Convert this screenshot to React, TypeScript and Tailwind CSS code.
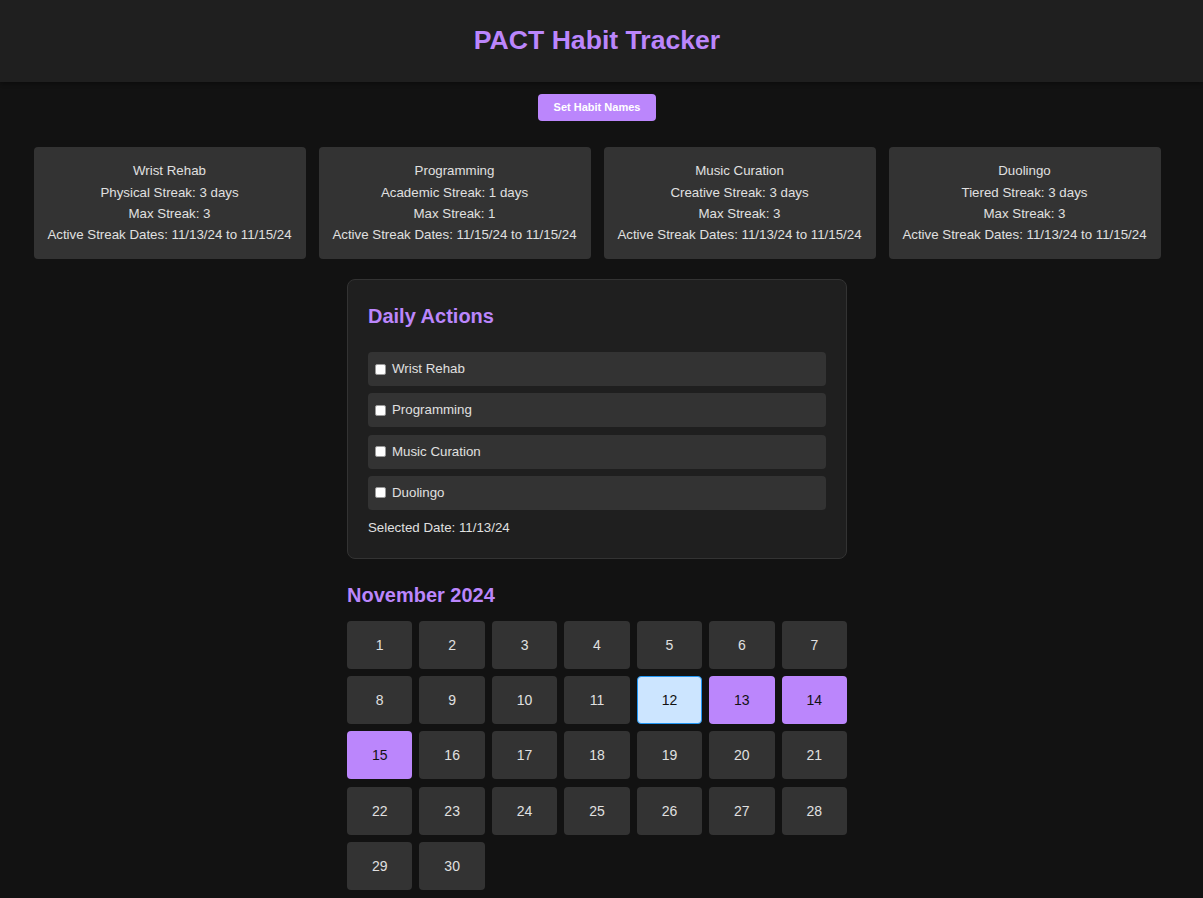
import React from "react";

type Habit = {
  name: string;
  kind: string;
  streak: number;
  max: number;
  from: string;
  to: string;
};

const habits: Habit[] = [
  { name: "Wrist Rehab", kind: "Physical", streak: 3, max: 3, from: "11/13/24", to: "11/15/24" },
  { name: "Programming", kind: "Academic", streak: 1, max: 1, from: "11/15/24", to: "11/15/24" },
  { name: "Music Curation", kind: "Creative", streak: 3, max: 3, from: "11/13/24", to: "11/15/24" },
  { name: "Duolingo", kind: "Tiered", streak: 3, max: 3, from: "11/13/24", to: "11/15/24" },
];

const streakDays = [13, 14, 15];
const selectedDay = 12;

function HabitCard({ habit }: { habit: Habit }) {
  return (
    <div className="w-[272px] rounded-[4px] bg-[#333333] pt-[13px] pb-[14px] text-center text-[13.3px] leading-[21px] text-[#e0e0e0]">
      <p className="mb-[1px]">{habit.name}</p>
      <p>
        {habit.kind} Streak: {habit.streak} days
      </p>
      <p>Max Streak: {habit.max}</p>
      <p>
        Active Streak Dates: {habit.from} to {habit.to}
      </p>
    </div>
  );
}

function DailyActions() {
  return (
    <div className="w-[500px] rounded-[8px] border border-[#333333] bg-[#1f1f1f] px-[20px] pt-[24px] pb-[22px]">
      <h2 className="text-[20px] leading-[24px] font-bold text-[#bb86fc]">Daily Actions</h2>
      <div className="mt-[24px] flex flex-col gap-[7.3px]">
        {habits.map((h) => (
          <label
            key={h.name}
            className="flex h-[34px] items-center rounded-[4px] bg-[#333333] pl-[7px] text-[13.3px] text-[#e0e0e0]"
          >
            <span className="h-[11px] w-[11px] rounded-[2px] border border-[#9a9a9a] bg-white"></span>
            <span className="ml-[6px]">{h.name}</span>
          </label>
        ))}
      </div>
      <p className="mt-[10px] text-[13.3px] leading-[16px] text-[#e0e0e0]">Selected Date: 11/13/24</p>
    </div>
  );
}

function Calendar() {
  const days = Array.from({ length: 30 }, (_, i) => i + 1);
  return (
    <div className="w-[500px]">
      <h2 className="text-[20px] leading-[24px] font-bold text-[#bb86fc]">November 2024</h2>
      <div className="mt-[14px] grid grid-cols-7 gap-x-[7px] gap-y-[7.3px]">
        {days.map((d) => {
          let cls = "bg-[#333333] text-[#e0e0e0]";
          if (d === selectedDay) cls = "bg-[#cce5ff] text-[#121212] border border-[#2196f3]";
          else if (streakDays.includes(d)) cls = "bg-[#bb86fc] text-[#121212]";
          return (
            <div
              key={d}
              className={`flex h-[48px] items-center justify-center rounded-[4px] pt-[1px] text-[14px] ${cls}`}
            >
              {d}
            </div>
          );
        })}
      </div>
    </div>
  );
}

export default function App() {
  return (
    <div className="min-h-screen bg-[#121212] pb-[20px] [font-family:'Liberation_Sans',Arial,sans-serif]">
      <header className="flex h-[82px] w-full items-center bg-[#1f1f1f] shadow-[0_2px_4px_rgba(0,0,0,0.3)]">
        <h1 className="w-[1194px] text-center text-[26.6px] font-bold text-[#bb86fc]">
          PACT Habit Tracker
        </h1>
      </header>
      <div className="flex w-[1194px] flex-col items-center">
        <button className="mt-[12px] h-[27px] w-[118px] rounded-[4px] bg-[#bb86fc] text-[11px] font-bold text-white">
          Set Habit Names
        </button>
        <div className="mt-[26px] flex gap-[13px]">
          {habits.map((h) => (
            <HabitCard key={h.name} habit={h} />
          ))}
        </div>
        <div className="mt-[20px]">
          <DailyActions />
        </div>
        <div className="mt-[24px]">
          <Calendar />
        </div>
      </div>
    </div>
  );
}
